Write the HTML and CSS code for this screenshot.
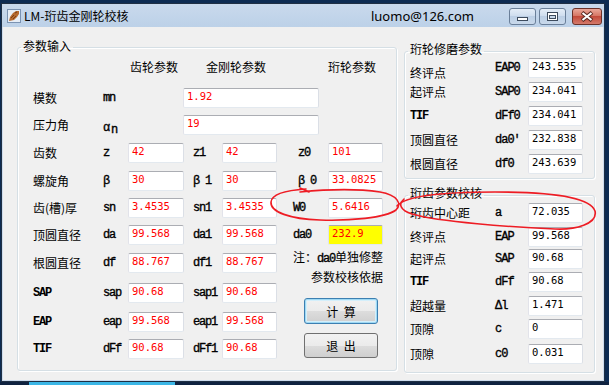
FILE: index.html
```html
<!DOCTYPE html>
<html lang="zh-CN">
<head>
  <meta charset="UTF-8">
  <title>LM-珩齿金刚轮校核</title>
  <link rel="stylesheet" href="styles.css">
</head>
<body>
<div class="window">
  <div class="titlebar">
    <svg class="app-icon" width="14" height="14" viewBox="0 0 14 14">
      <rect x="0.5" y="0.5" width="13" height="13" fill="#e6edf6" stroke="#7b93b2"/>
      <path d="M2 12 L3 8 L6 4 L9 2 L12 2 L12 5 L10 8 L7 11 Z" fill="#b4692f"/>
      <path d="M4 9 L7 6 M6 10 L9 7 M8 4 L10 3" stroke="#7a3d14" stroke-width="1"/>
    </svg>
    <span class="title">LM-珩齿金刚轮校核</span>
    <span class="mail">luomo@126.com</span>
    <div class="caption-btns">
      <span class="cap min">
        <svg width="11" height="5" viewBox="0 0 11 5"><rect x="0.5" y="0.5" width="10" height="3" fill="#fff" stroke="#3e4c5e"/></svg>
      </span>
      <span class="cap max">
        <svg width="11" height="9" viewBox="0 0 11 9"><rect x="0.5" y="0.5" width="10" height="8" fill="#fff" stroke="#3e4c5e"/><rect x="2.5" y="3.5" width="6" height="3" fill="#c9d9eb" stroke="#3e4c5e"/></svg>
      </span>
      <span class="cap close">
        <svg width="14" height="11" viewBox="0 0 14 11"><path d="M2 1.5 L12 9.5 M12 1.5 L2 9.5" stroke="#5b2a22" stroke-width="4"/><path d="M2.5 2 L11.5 9 M11.5 2 L2.5 9" stroke="#fff" stroke-width="2"/></svg>
      </span>
    </div>
  </div>

  <div class="client">
    <fieldset class="group main-group">
      <legend>参数输入</legend>
      <div class="heads">
        <span class="head-gear">齿轮参数</span>
        <span class="head-dia">金刚轮参数</span>
        <span class="head-hone">珩轮参数</span>
      </div>
      <div class="grid">
        <span class="lbl">模数</span><span class="code c1">mn</span><span class="field wide">1.92</span>
        <span class="lbl">压力角</span><span class="code c1 alpha">α<span class="sub">n</span></span><span class="field wide">19</span>

        <span class="lbl">齿数</span><span class="code c1">z</span><span class="field">42</span>
        <span class="code c2">z1</span><span class="field">42</span>
        <span class="code c3">z0</span><span class="field">101</span>

        <span class="lbl">螺旋角</span><span class="code c1">β</span><span class="field">30</span>
        <span class="code c2">β 1</span><span class="field">30</span>
        <span class="code c3">β 0</span><span class="field">33.0825</span>

        <span class="lbl">齿(槽)厚</span><span class="code c1">sn</span><span class="field">3.4535</span>
        <span class="code c2">sn1</span><span class="field">3.4535</span>
        <span class="code c3b">W0</span><span class="field">5.6416</span>

        <span class="lbl">顶圆直径</span><span class="code c1">da</span><span class="field">99.568</span>
        <span class="code c2">da1</span><span class="field">99.568</span>
        <span class="code c3b">da0</span><span class="field yellow">232.9</span>

        <span class="lbl">根圆直径</span><span class="code c1">df</span><span class="field">88.767</span>
        <span class="code c2">df1</span><span class="field">88.767</span>
        <div class="note">注：<span class="mono">da0</span>单独修整<br>参数校核依据</div>

        <span class="lbl latin">SAP</span><span class="code c1">sap</span><span class="field">90.68</span>
        <span class="code c2">sap1</span><span class="field">90.68</span>

        <span class="lbl latin">EAP</span><span class="code c1">eap</span><span class="field">99.568</span>
        <span class="code c2">eap1</span><span class="field">99.568</span>

        <span class="lbl latin">TIF</span><span class="code c1">dFf</span><span class="field">90.68</span>
        <span class="code c2">dFf1</span><span class="field">90.68</span>

        <div class="actions">
          <span class="btn default">计 算</span>
          <span class="btn">退 出</span>
        </div>
      </div>
    </fieldset>

    <div class="side">
      <fieldset class="group side-group">
        <legend>珩轮修磨参数</legend>
        <div class="side-grid rows-a">
          <span class="lbl low">终评点</span><span class="code">EAP0</span><span class="field black">243.535</span>
          <span class="lbl">起评点</span><span class="code">SAP0</span><span class="field black">234.041</span>
          <span class="lbl latin">TIF</span><span class="code">dFf0</span><span class="field black">234.041</span>
          <span class="lbl">顶圆直径</span><span class="code">da0′</span><span class="field black">232.838</span>
          <span class="lbl">根圆直径</span><span class="code">df0</span><span class="field black">243.639</span>
        </div>
      </fieldset>

      <fieldset class="group side-group check-group">
        <legend>珩齿参数校核</legend>
        <div class="side-grid rows-b">
          <span class="lbl">珩齿中心距</span><span class="code">a</span><span class="field black">72.035</span>
          <span class="lbl">终评点</span><span class="code">EAP</span><span class="field black">99.568</span>
          <span class="lbl">起评点</span><span class="code">SAP</span><span class="field black">90.68</span>
          <span class="lbl latin">TIF</span><span class="code">dFf</span><span class="field black">90.68</span>
          <span class="lbl">超越量</span><span class="code">Δl</span><span class="field black">1.471</span>
          <span class="lbl">顶隙</span><span class="code">c</span><span class="field black">0</span>
          <span class="lbl">顶隙</span><span class="code">c0</span><span class="field black">0.031</span>
        </div>
      </fieldset>
    </div>
  </div>
</div>
<div class="taskbar"></div>

<!-- hand-drawn marks over the screenshot -->
<svg class="marks" width="609" height="385" viewBox="0 0 609 385">
  <path d="M306 189 C290 190 272 193 271 202 C270 212 290 219 320 220 C350 221 385 218 396 210 C402 204 398 195 380 192 C360 189 330 189 300 192" />
  <path d="M300 188 L309 192" />
  <path d="M397 206 C405 196 440 192 495 192 C545 192 590 196 595 211 C598 224 575 230 555 229 C510 227 440 222 412 214 C400 210 398 204 404 199" />
</svg>
</body>
</html>
```

FILE: styles.css
```css
* {
  box-sizing: border-box;
}

body {
  margin: 0;
  width: 609px;
  height: 385px;
  overflow: hidden;
  position: relative;
  background: #0d2b52;
  font-family: "Noto Sans CJK SC", sans-serif;
  font-size: 12px;
  color: #000;
}

/*===============================
Window frame
=============*/

.window {
  margin: 3px 0 0 1px;
  width: 604px;
  height: 379px;
  border: 1px solid #1f2f44;
  background: #cddcee;
  display: flex;
  flex-direction: column;
}

.titlebar {
  height: 23px;
  flex: none;
  display: flex;
  align-items: center;
  padding-left: 5px;
  background: linear-gradient(#c9d9ec, #bcd1e8);
}

.app-icon {
  flex: none;
  margin-right: 3px;
}

.title {
  font-size: 12px;
  line-height: 16px;
}

.mail {
  margin-left: auto;
  margin-right: 35px;
  font-family: "Noto Sans", sans-serif;
  font-size: 13px;
  line-height: 16px;
}

.caption-btns {
  display: flex;
  align-self: flex-start;
  margin-top: 4px;
  margin-right: 2px;
}

.cap {
  width: 27px;
  height: 17px;
  display: flex;
  align-items: center;
  justify-content: center;
  border: 1px solid #6a7f99;
  border-radius: 3px;
  background: linear-gradient(#e4edf7, #cddcee 50%, #bccfe5 50%, #c9d9eb);
}

.max {
  margin-left: 3px;
}

.min svg {
  margin-top: 6px;
}

.close {
  width: 30px;
  margin-left: 6px;
  border-color: #6b3128;
  background: linear-gradient(#eaa799, #d4715f 50%, #c34a3a 50%, #d47a6b);
}

.client {
  flex: 1;
  margin: 0 1px 1px;
  background: #f0f0f0;
  display: flex;
  align-items: flex-start;
  padding: 12px 0 0 14px;
}

.taskbar {
  height: 3px;
  background: linear-gradient(to right, #0f2240 29px, #3bb6e6 29px, #3bb6e6 175px, #0f2240 175px);
}

/*===============================
Group boxes
=============*/

.group {
  margin: 0;
  min-width: 0;
  border: 1px solid #d5dfe5;
  border-radius: 3px;
  box-shadow: inset 1px 1px 0 #fff, 1px 1px 0 #fff;
}

.group legend {
  padding: 0 2px 2px;
  line-height: 14px;
  white-space: nowrap;
}

.main-group {
  width: 380px;
  padding: 0 0 11px 3px;
}

.heads {
  display: flex;
  margin-top: 2px;
  margin-bottom: 11px;
  padding-left: 109px;
  line-height: 20px;
  white-space: nowrap;
}

.head-dia {
  margin-left: 28px;
}

.head-hone {
  margin-left: 62px;
}

.grid {
  margin-left: 12px;
  display: grid;
  grid-template-columns: 69px 26px 56px 38px 55px 51px 55px;
  grid-template-rows: 27px 28px 28px 27px 27px 28px 30px 29px 27px 20px;
  align-items: start;
}

.lbl {
  grid-column: 1;
  line-height: 20px;
  white-space: nowrap;
}

.latin,
.code,
.mono {
  font-family: "Liberation Mono", monospace;
  font-size: 12px;
  letter-spacing: -1.2px;
  -webkit-text-stroke: 0.35px #000;
}

.latin {
  font-weight: bold;
  -webkit-text-stroke: 0;
}

.code {
  line-height: 20px;
  white-space: nowrap;
}

.c1 {
  padding-left: 1px;
}

.c2 {
  padding-left: 9px;
}

.c3 {
  padding-left: 21px;
}

.c3b {
  padding-left: 16px;
}

.alpha {
  padding-top: 3px;
}

.sub {
  position: relative;
  top: 2px;
  margin-left: 2px;
}

.field {
  height: 20px;
  padding: 0 3px;
  border: 1px solid;
  border-color: #abadb3 #dbdfe6 #e3e9ef #e2e3ea;
  border-radius: 2px;
  background: #fff;
  color: #ff0000;
  font-family: "DejaVu Sans Mono", monospace;
  font-size: 10.5px;
  line-height: 14px;
  white-space: nowrap;
  overflow: hidden;
}

.wide {
  grid-column: 4 / 7;
  width: 136px;
  margin-left: -1px;
}

.yellow {
  background: #ffff00;
}

.black {
  color: #000;
}

.note {
  grid-column: 6 / 8;
  margin-top: -5px;
  text-align: right;
  line-height: 18px;
  white-space: nowrap;
}

.actions {
  grid-column: 6 / 8;
  grid-row: 8 / 11;
  display: flex;
  flex-direction: column;
  gap: 9px;
  padding: 15px 0 0 27px;
}

.btn {
  width: 74px;
  height: 25px;
  display: flex;
  align-items: center;
  justify-content: center;
  border: 1px solid #707070;
  border-radius: 3px;
  background: linear-gradient(#f2f2f2, #ebebeb 50%, #dddddd 50%, #cfcfcf);
  word-spacing: 3px;
}

.btn.default {
  height: 26px;
  border-color: #3c7fb1;
  box-shadow: inset 0 0 0 1px #9fd9f4, inset 0 0 0 2px #d4effb;
}

/*===============================
Right column
=============*/

.side {
  margin-left: 7px;
  width: 191px;
  display: flex;
  flex-direction: column;
}

.side-group {
  margin-top: 3px;
  padding: 0 0 4px 3px;
}

.side-group legend {
  padding-bottom: 4px;
}

.check-group {
  margin-top: 7px;
  padding-bottom: 8px;
}

.side-grid {
  margin-left: 2px;
  display: grid;
  grid-template-columns: 85px 33px 55px;
  align-items: start;
}

.rows-a {
  margin-top: -2px;
  grid-template-rows: 24px 24px 24px 24px 20px;
}

.rows-b {
  margin-top: -1px;
  grid-template-rows: 24px 22px 23px 24px 23px 25px 20px;
}

.side-grid .code {
  letter-spacing: -1px;
}

.low {
  padding-top: 5px;
}

/*===============================
Red marks
=============*/

.marks {
  position: absolute;
  left: 0;
  top: 0;
  pointer-events: none;
}

.marks path {
  fill: none;
  stroke: #ee1c24;
  stroke-width: 1.6;
  stroke-linecap: round;
}
```
